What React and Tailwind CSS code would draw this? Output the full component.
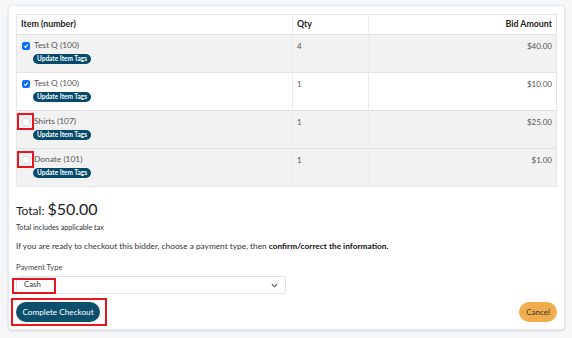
import React from "react";

const items = [
  { name: "Test Q (100)", qty: 4, amount: "$40.00", checked: true, shade: true },
  { name: "Test Q (100)", qty: 1, amount: "$10.00", checked: true, shade: false },
  { name: "Shirts (107)", qty: 1, amount: "$25.00", checked: false, shade: true, marked: true },
  { name: "Donate (101)", qty: 1, amount: "$1.00", checked: false, shade: true, marked: true },
];

function Check({ checked }) {
  if (checked) {
    return (
      <span className="w-[8px] h-[8px] rounded-[2px] bg-[#0d6efd] flex items-center justify-center shrink-0">
        <svg width="6" height="6" viewBox="0 0 10 10">
          <path d="M2 5.2 L4.2 7.3 L8 2.8" fill="none" stroke="white" strokeWidth="1.8" />
        </svg>
      </span>
    );
  }
  return <span className="w-[8px] h-[8px] rounded-[2px] bg-white border border-[#dcdcdc] shrink-0" />;
}

export default function App() {
  return (
    <div className="w-[572px] h-[338px] bg-[#f6f7f9] pt-[5px] pl-[8px] pr-[7px] font-['Lato',sans-serif] text-[#333]">
      <div className="bg-white rounded-[3px] border border-[#e8e9ec] shadow-sm h-[325px] pt-[8px] px-[7px]">
        <table className="w-[541px] border-collapse border border-[#e6e6e6] leading-none">
          <thead>
            <tr className="h-[20px] text-[8.8px]">
              <th className="text-left font-bold text-[#222] pl-[4px] w-[276px] border-r border-[#ececec]">Item (number)</th>
              <th className="text-left font-bold text-[#222] pl-[4px] w-[76px] border-r border-[#ececec]">Qty</th>
              <th className="text-right font-bold text-[#222] pr-[4px]">Bid Amount</th>
            </tr>
          </thead>
          <tbody>
            {items.map((it, i) => (
              <tr key={i} className={"h-[38px] border-t border-[#e2e2e2] " + (it.shade ? "bg-[#f2f2f2]" : "bg-white")}>
                <td className="align-top pl-[5px] pt-[6px] border-r border-[#ececec]">
                  <div className="flex items-center gap-[4px] h-[9px] relative">
                    <Check checked={it.checked} />
                    <span className="text-[#555] text-[8.4px] leading-none">{it.name}</span>
                    {it.marked && (
                      <span className="absolute left-[-5px] top-[-4px] w-[17px] h-[17px] border-2 border-[#e8141e]" />
                    )}
                  </div>
                  <div className="flex w-fit items-center mt-[4px] ml-[11px] h-[10px] px-[4px] rounded-full bg-[#054a6b] text-white text-[6.5px] font-bold leading-none">
                    Update Item Tags
                  </div>
                </td>
                <td className="align-top pl-[4px] pt-[7px] text-[8px] text-[#555] leading-none border-r border-[#ececec]">{it.qty}</td>
                <td className="align-top pr-[4px] pt-[7px] text-[8px] text-right text-[#555] leading-none">{it.amount}</td>
              </tr>
            ))}
          </tbody>
        </table>

        <div className="mt-[14px] flex items-baseline gap-[3px] leading-none">
          <span className="text-[12px] text-[#222]">Total:</span>
          <span className="text-[16px] text-[#222]">$50.00</span>
        </div>
        <div className="mt-[7px] text-[7.2px] text-[#333] leading-none">Total includes applicable tax</div>
        <div className="mt-[11px] text-[8.3px] text-[#333] leading-none">
          If you are ready to checkout this bidder, choose a payment type, then <b className="text-[#111]">confirm/correct the information.</b>
        </div>
        <div className="mt-[13px] text-[7.5px] text-[#444] leading-none">Payment Type</div>
        <div className="mt-[5px] w-[270px] h-[18px] rounded-[3px] border border-[#e2e2e2] flex items-center justify-between pl-[7px] pr-[7px] relative">
          <span className="text-[7.8px] text-[#333]">Cash</span>
          <svg width="7" height="5" viewBox="0 0 8 5">
            <path d="M1 1 L4 4 L7 1" fill="none" stroke="#555" strokeWidth="1.2" />
          </svg>
          <span className="absolute left-[-5px] top-[1px] w-[44px] h-[16px] border-2 border-[#e8141e]" />
        </div>
        <div className="mt-[8px] flex justify-between items-center">
          <div className="relative flex">
            <button className="h-[20px] w-[84px] rounded-full bg-[#0b4f6c] text-white text-[8.2px] leading-none">
              Complete Checkout
            </button>
            <span className="absolute left-[-5px] top-[-4px] w-[96px] h-[28px] border-2 border-[#e8141e]" />
          </div>
          <button className="h-[20px] w-[38px] rounded-full bg-[#f0ad4e] text-[#333] text-[8px] leading-none">Cancel</button>
        </div>
      </div>
    </div>
  );
}
